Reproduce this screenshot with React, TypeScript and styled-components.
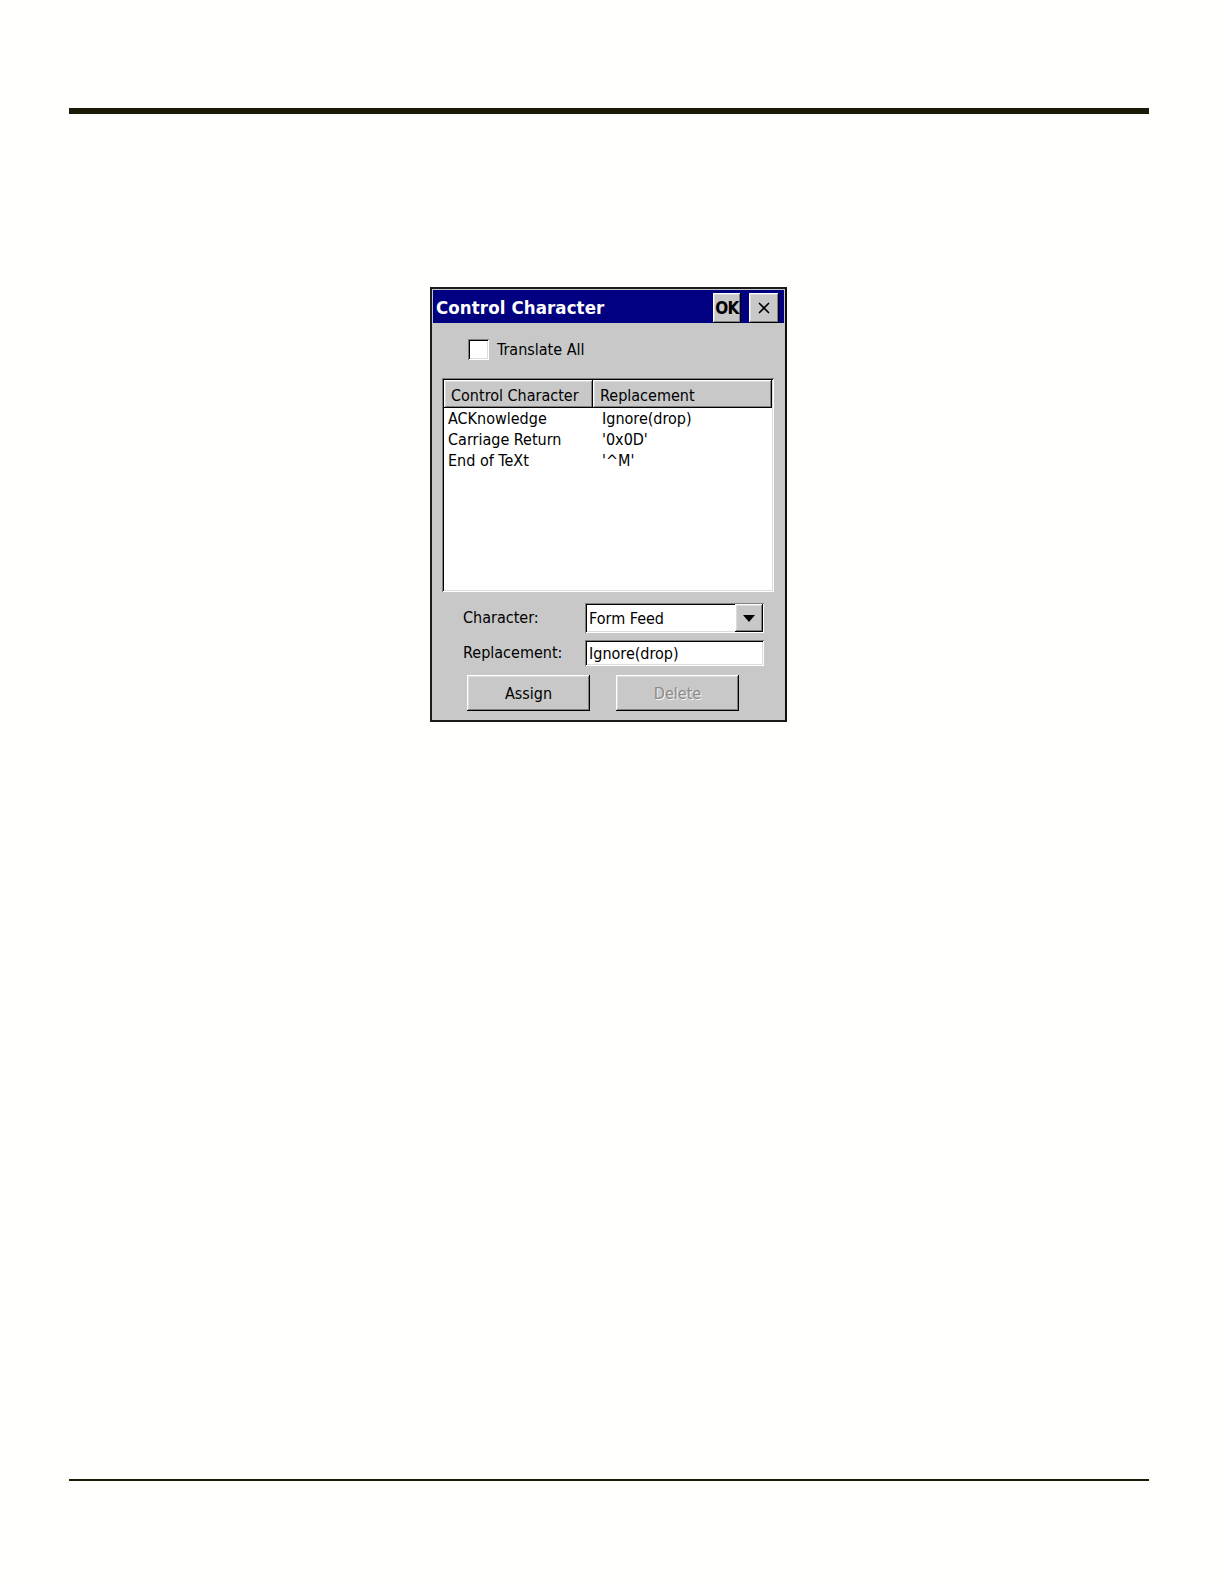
import { FC } from 'react';
import styled, { createGlobalStyle, css } from 'styled-components';

const GlobalStyle = createGlobalStyle`
  html, body {
    margin: 0;
    padding: 0;
    background: #fffffd;
  }
  body {
    font-family: "DejaVu Sans Condensed", "DejaVu Sans", sans-serif;
    font-stretch: condensed;
    color: #000;
  }
`;

const raised = css`
  background: #c8c8c8;
  box-shadow: inset -1px -1px 0 #000, inset 1px 1px 0 #fff,
    inset -2px -2px 0 #808080, inset 2px 2px 0 #dcdcdc;
`;

const sunken = css`
  background: #fff;
  box-shadow: inset 1px 1px 0 #808080, inset -1px -1px 0 #fff,
    inset 2px 2px 0 #000, inset -2px -2px 0 #dcdcdc;
`;

const Page = styled.div`
  width: 1224px;
  min-height: 1584px;
  box-sizing: border-box;
  padding: 108px 75px 0 69px;
  display: flex;
  flex-direction: column;
`;

const Rule = styled.div<{ thick: number }>`
  height: ${(p) => p.thick}px;
  background: #1a1a06;
`;

const DialogArea = styled.div`
  padding: 173px 0 0 361px;
  margin-bottom: 757px;
`;

const Dialog = styled.div`
  width: 357px;
  height: 435px;
  box-sizing: border-box;
  border: 2px solid #1c1c1c;
  border-right-color: #101010;
  padding: 1px;
  background: #c8c8c8;
  display: flex;
  flex-direction: column;
`;

const TitleBar = styled.div`
  height: 33px;
  flex: none;
  background: #000080;
  display: flex;
  align-items: flex-end;
  padding: 0 5px 0 3px;
`;

const Title = styled.div`
  flex: 1;
  align-self: center;
  color: #fff;
  font-weight: bold;
  font-size: 18.5px;
  letter-spacing: 0.1px;
  padding-top: 2px;
`;

const TitleButton = styled.div<{ w: number }>`
  ${raised};
  width: ${(p) => p.w}px;
  height: 30px;
  margin-left: 8px;
  display: flex;
  align-items: center;
  justify-content: center;
  font-weight: bold;
  font-size: 17px;
  letter-spacing: -0.8px;
  &:first-of-type {
    margin-left: 0;
  }
`;

const Body = styled.div`
  flex: 1;
  display: flex;
  flex-direction: column;
  padding: 15px 0 0 9px;
  font-size: 16px;
`;

const CheckRow = styled.label`
  display: flex;
  align-items: center;
  padding-left: 26px;
  height: 22px;
`;

const CheckBox = styled.span`
  ${sunken};
  width: 21px;
  height: 21px;
  margin-right: 8px;
`;

const List = styled.div`
  ${sunken};
  margin-top: 18px;
  width: 332px;
  height: 214px;
  box-sizing: border-box;
  padding: 2px;
  display: flex;
  flex-direction: column;
`;

const HeaderRow = styled.div`
  display: grid;
  grid-template-columns: 149px 1fr;
  height: 28px;
  flex: none;
`;

const HeaderCell = styled.div`
  ${raised};
  display: flex;
  align-items: center;
  padding-left: 7px;
  padding-top: 3px;
  box-sizing: border-box;
`;

const Row = styled.div`
  display: grid;
  grid-template-columns: 149px 1fr;
  height: 21px;
  line-height: 21px;
  &:first-of-type {
    margin-top: 2px;
  }
`;

const Cell = styled.div<{ indent: number }>`
  padding-left: ${(p) => p.indent}px;
  white-space: nowrap;
`;

const Form = styled.div`
  display: grid;
  grid-template-columns: 122px 179px;
  grid-template-rows: 30px 26px;
  row-gap: 7px;
  margin-top: 11px;
  padding-left: 21px;
  align-items: center;
`;

const Label = styled.span`
  line-height: 1;
`;

const Field = styled.div<{ h: number }>`
  ${sunken};
  height: ${(p) => p.h}px;
  box-sizing: border-box;
  display: flex;
  align-items: center;
  padding-left: 4px;
`;

const FieldText = styled.span`
  flex: 1;
  white-space: nowrap;
`;

const DropButton = styled.div`
  ${raised};
  width: 28px;
  height: 28px;
  margin-right: 1px;
  display: flex;
  align-items: center;
  justify-content: center;
`;

const Buttons = styled.div`
  display: flex;
  gap: 26px;
  margin-top: 9px;
  padding-left: 25px;
`;

const Button = styled.div<{ disabled?: boolean }>`
  ${raised};
  width: 123px;
  height: 36px;
  display: flex;
  align-items: center;
  justify-content: center;
  color: ${(p) => (p.disabled ? '#8a8a8a' : '#000')};
  text-shadow: ${(p) => (p.disabled ? '1px 1px 0 #f4f4f4' : 'none')};
`;

const rows = [
  ['ACKnowledge', 'Ignore(drop)'],
  ['Carriage Return', "'0x0D'"],
  ['End of TeXt', "'^M'"],
];

const App: FC = () => (
  <Page>
    <GlobalStyle />
    <Rule thick={6} />
    <DialogArea>
      <Dialog>
        <TitleBar>
          <Title>Control Character</Title>
          <TitleButton w={28}>OK</TitleButton>
          <TitleButton w={30}>
            <svg width="14" height="14" viewBox="0 0 14 14">
              <path d="M2 2 L12 12 M12 2 L2 12" stroke="#000" strokeWidth="1.6" />
            </svg>
          </TitleButton>
        </TitleBar>
        <Body>
          <CheckRow>
            <CheckBox />
            Translate All
          </CheckRow>
          <List>
            <HeaderRow>
              <HeaderCell>Control Character</HeaderCell>
              <HeaderCell>Replacement</HeaderCell>
            </HeaderRow>
            {rows.map(([name, value]) => (
              <Row key={name}>
                <Cell indent={4}>{name}</Cell>
                <Cell indent={9}>{value}</Cell>
              </Row>
            ))}
          </List>
          <Form>
            <Label>Character:</Label>
            <Field h={30}>
              <FieldText>Form Feed</FieldText>
              <DropButton>
                <svg width="12" height="7" viewBox="0 0 12 7">
                  <path d="M0 0 H12 L6 7 Z" fill="#000" />
                </svg>
              </DropButton>
            </Field>
            <Label>Replacement:</Label>
            <Field h={26}>
              <FieldText>Ignore(drop)</FieldText>
            </Field>
          </Form>
          <Buttons>
            <Button>Assign</Button>
            <Button disabled>Delete</Button>
          </Buttons>
        </Body>
      </Dialog>
    </DialogArea>
    <Rule thick={2} />
  </Page>
);

export default App;
